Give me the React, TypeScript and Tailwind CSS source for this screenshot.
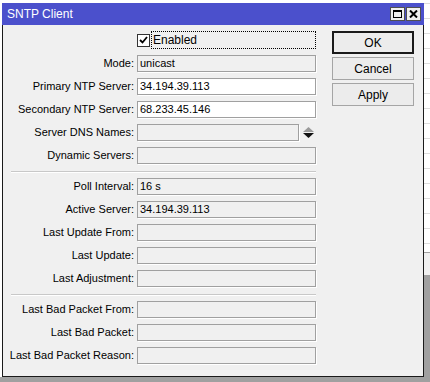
import React from "react";

const font = { fontFamily: '"Liberation Sans", Arial, sans-serif' };

const Field = ({ value, editable, className = "" }: { value?: string; editable?: boolean; className?: string }) => (
  <div
    className={`h-[17px] border border-[#a0a0a0] shadow-[1px_1px_0_#ffffff] flex items-center pl-[2px] text-[11px] text-black leading-none ${
      editable ? "bg-white" : "bg-[#f0f0f0]"
    } ${className}`}
  >
    {value}
  </div>
);

const Row = ({ label, children, mt = "mt-[6px]" }: { label: string; children: React.ReactNode; mt?: string }) => (
  <div className={`flex items-center h-[17px] ${mt}`}>
    <div className="w-[131px] text-right text-[11px] text-black leading-none whitespace-nowrap">{label}</div>
    <div className="ml-[3px] w-[179px] flex items-center">{children}</div>
  </div>
);

const Separator = ({ mt }: { mt: string }) => (
  <div className={`${mt} ml-[8px] w-[305px] h-px bg-[#c8c8c8] shadow-[0_1px_0_#ffffff]`} />
);

const Btn = ({ label, primary }: { label: string; primary?: boolean }) => (
  <div
    className={`h-[23px] w-[82px] flex items-center justify-center text-[12px] text-black bg-[#ececec] ${
      primary ? "border-2 border-[#1a1a1a]" : "border border-[#a5a5a5]"
    }`}
  >
    {label}
  </div>
);

export default function App() {
  return (
    <div className="w-[430px] h-[382px] bg-white overflow-hidden flex flex-col" style={font}>
      <div className="flex h-[377px]">
        <div className="w-[2px] bg-white" />
        {/* window */}
        <div className="w-[422px] flex flex-col">
          <div className="h-[3px] bg-white" />
          <div className="flex-1 flex flex-col border-l border-r border-b border-[#1a1a1a] bg-[#f0f0f0]">
            {/* title bar */}
            <div className="h-[22px] bg-[#4b50cc] flex items-center pl-[5px] pr-[3px] -mx-px">
              <span className="text-white text-[12px] leading-none">SNTP Client</span>
              <div className="ml-auto flex gap-px">
                <div className="w-[15px] h-[14px] bg-[#f0f0f0] border border-[#505050] flex items-center justify-center">
                  <div className="w-[9px] h-[8px] border border-black border-t-2" />
                </div>
                <div className="w-[15px] h-[14px] bg-[#f0f0f0] border border-[#505050] flex items-center justify-center">
                  <svg width="9" height="8" viewBox="0 0 9 8">
                    <path d="M1 0.5 L8 7.5 M8 0.5 L1 7.5" stroke="black" strokeWidth="2" />
                  </svg>
                </div>
              </div>
            </div>
            {/* body */}
            <div className="flex">
              <div className="flex flex-col">
                <div className="flex items-center h-[18px] mt-[6px]">
                  <div className="w-[131px]" />
                  <div className="ml-[3px] flex items-center">
                    <div className="w-[13px] h-[13px] bg-white border border-[#333] flex items-center justify-center">
                      <svg width="9" height="8" viewBox="0 0 9 8">
                        <path d="M1 4 L3.5 6.5 L8 1" fill="none" stroke="black" strokeWidth="1.8" />
                      </svg>
                    </div>
                    <div className="ml-[1px] w-[165px] h-[18px] border border-dotted border-black flex items-center pl-[1px] text-[12px] text-black leading-none">
                      Enabled
                    </div>
                  </div>
                </div>
                <Row label="Mode:" mt="mt-[6px]">
                  <Field value="unicast" className="w-full" />
                </Row>
                <Row label="Primary NTP Server:">
                  <Field value="34.194.39.113" editable className="w-full" />
                </Row>
                <Row label="Secondary NTP Server:">
                  <Field value="68.233.45.146" editable className="w-full" />
                </Row>
                <Row label="Server DNS Names:">
                  <Field className="w-[162px]" />
                  <div className="ml-[4px] flex flex-col items-center gap-[1px]">
                    <svg width="11" height="5" viewBox="0 0 11 5">
                      <path d="M5.5 0 L11 5 L0 5 Z" fill="#9a9a9a" />
                    </svg>
                    <svg width="11" height="5" viewBox="0 0 11 5">
                      <path d="M0 0 L11 0 L5.5 5 Z" fill="#111" />
                    </svg>
                  </div>
                </Row>
                <Row label="Dynamic Servers:">
                  <Field className="w-full" />
                </Row>
                <Separator mt="mt-[7px]" />
                <Row label="Poll Interval:">
                  <Field value="16 s" className="w-full" />
                </Row>
                <Row label="Active Server:">
                  <Field value="34.194.39.113" className="w-full" />
                </Row>
                <Row label="Last Update From:">
                  <Field className="w-full" />
                </Row>
                <Row label="Last Update:">
                  <Field className="w-full" />
                </Row>
                <Row label="Last Adjustment:">
                  <Field className="w-full" />
                </Row>
                <Separator mt="mt-[7px]" />
                <Row label="Last Bad Packet From:">
                  <Field className="w-full" />
                </Row>
                <Row label="Last Bad Packet:">
                  <Field className="w-full" />
                </Row>
                <Row label="Last Bad Packet Reason:">
                  <Field className="w-full" />
                </Row>
              </div>
              <div className="ml-[16px] mt-[6px] flex flex-col gap-[3px]">
                <Btn label="OK" primary />
                <Btn label="Cancel" />
                <Btn label="Apply" />
              </div>
            </div>
          </div>
        </div>
        {/* background to the right */}
        <div className="flex-1 flex flex-col">
          <div className="h-[252px] bg-white flex flex-col pt-[3px] gap-[14px]">
            {Array.from({ length: 17 }).map((_, i) => (
              <div key={i} className="h-px bg-[#dcdcdc]" />
            ))}
          </div>
          <div className="h-[23px] bg-[#f0f0f0] border-t border-[#a0a0a0]" />
          <div className="flex-1 bg-[#a0a0a0]" />
        </div>
      </div>
      <div className="flex-1 bg-[#a0a0a0]" />
    </div>
  );
}
